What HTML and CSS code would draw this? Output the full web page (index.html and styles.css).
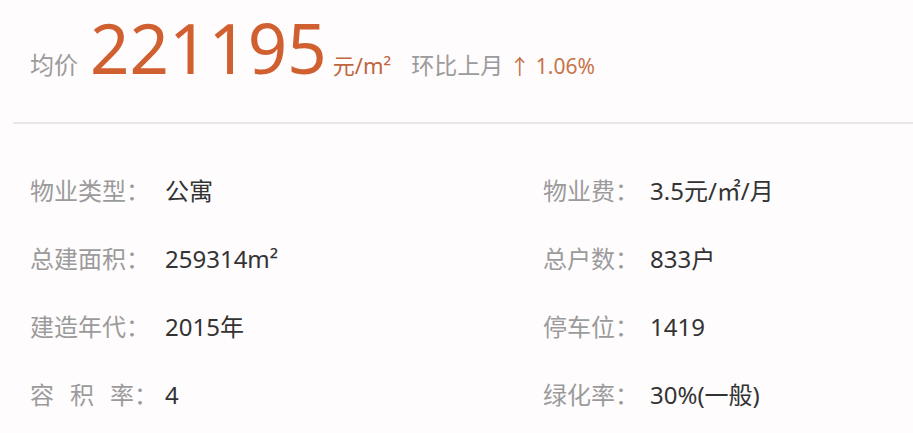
FILE: index.html
```html
<!DOCTYPE html>
<html lang="zh">
<head>
<meta charset="utf-8">
<link rel="stylesheet" href="styles.css">
</head>
<body>
<div class="page">
  <div class="price">
    <span class="price-label">均价</span>
    <span class="price-num">221195</span>
    <span class="price-unit">元/m²</span>
    <span class="trend-label">环比上月</span>
    <span class="trend-val">↑ 1.06%</span>
  </div>
  <div class="info">
    <div class="item"><span class="lbl">物业类型：</span><span class="val">公寓</span></div>
    <div class="item right"><span class="lbl">物业费：</span><span class="val">3.5元/㎡/月</span></div>
    <div class="item"><span class="lbl">总建面积：</span><span class="val">259314m²</span></div>
    <div class="item right"><span class="lbl">总户数：</span><span class="val">833户</span></div>
    <div class="item"><span class="lbl">建造年代：</span><span class="val">2015年</span></div>
    <div class="item right"><span class="lbl">停车位：</span><span class="val">1419</span></div>
    <div class="item"><span class="lbl"><span class="just">容积率</span>：</span><span class="val">4</span></div>
    <div class="item right"><span class="lbl">绿化率：</span><span class="val">30%(一般)</span></div>
  </div>
</div>
</body>
</html>
```
FILE: styles.css
```css
html, body {
  margin: 0;
  padding: 0;
  background: #fefcfd;
}
body {
  font-family: "Noto Sans", "Noto Sans CJK SC", sans-serif;
  width: 913px;
  height: 433px;
  overflow: hidden;
}
.page {
  padding-left: 13px;
}
.price {
  display: flex;
  align-items: baseline;
  height: 124px;
  box-sizing: border-box;
  padding-left: 17px;
  padding-top: 0;
  border-bottom: 2px solid #e9e7e8;
}
.price-label {
  font-size: 24px;
  color: #9b9b9b;
  margin-right: 12px;
}
.price-num {
  font-size: 69px;
  color: #d0602f;
  margin-right: 6px;
}
.price-unit {
  font-size: 22px;
  color: #c0663f;
  margin-right: 20px;
}
.trend-label {
  font-size: 23px;
  color: #9b9b9b;
  margin-right: 6px;
}
.trend-val {
  font-size: 21px;
  color: #c8734a;
}
.info {
  display: grid;
  grid-template-columns: 513px 1fr;
  grid-auto-rows: 68px;
  padding-left: 17px;
  padding-top: 33px;
}
.item {
  display: flex;
  align-items: center;
  font-size: 24px;
  line-height: 34px;
}
.lbl {
  display: block;
  width: 135px;
  color: #9b9b9b;
  flex: none;
  white-space: nowrap;
}
.right .lbl {
  width: 107px;
}
.just {
  display: inline-block;
  width: 104px;
  text-align: justify;
  text-align-last: justify;
}
.val {
  color: #333333;
}
```
